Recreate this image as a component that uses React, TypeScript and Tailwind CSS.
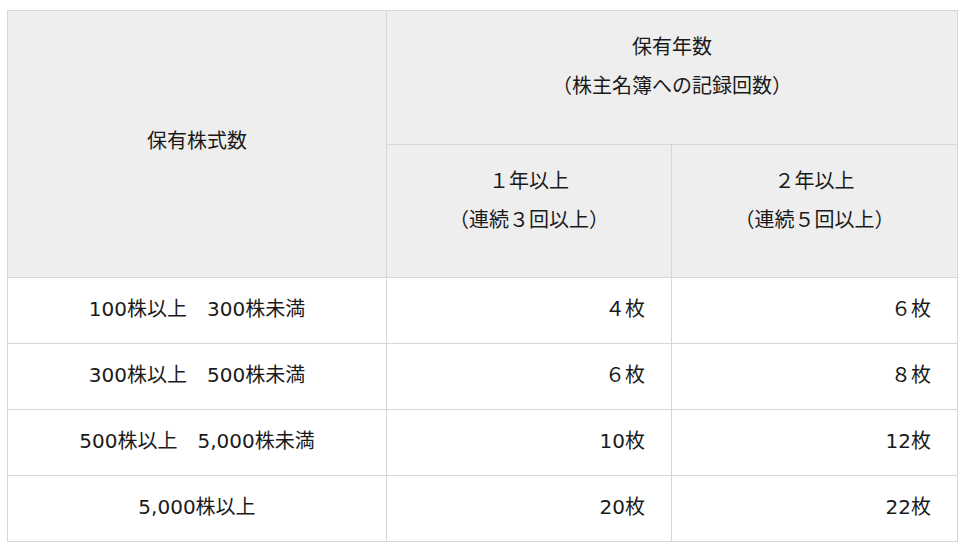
import React from 'react';

const rows = [
  { range: '100株以上　300株未満', one: '４枚', two: '６枚' },
  { range: '300株以上　500株未満', one: '６枚', two: '８枚' },
  { range: '500株以上　5,000株未満', one: '10枚', two: '12枚' },
  { range: '5,000株以上', one: '20枚', two: '22枚' },
];

export default function App() {
  return (
    <div
      className="min-h-[552px] w-[968px] bg-white pl-[7px] pt-[10px] text-[20px] text-[#1a1a1a]"
      style={{ fontFamily: '"DejaVu Sans", "Noto Sans CJK JP", sans-serif' }}
    >
      <table className="w-[950px] table-fixed border-collapse">
        <colgroup>
          <col className="w-[379px]" />
          <col className="w-[285px]" />
          <col className="w-[286px]" />
        </colgroup>
        <thead>
          <tr className="h-[134px]">
            <th
              rowSpan={2}
              className="border border-[#d6d6d6] bg-[#eeeeee] pb-[5px] align-middle font-normal leading-[39px]"
            >
              保有株式数
            </th>
            <th
              colSpan={2}
              className="border border-[#d6d6d6] bg-[#eeeeee] pt-[17px] align-top font-normal leading-[39px]"
            >
              <p>保有年数</p>
              <p>（株主名簿への記録回数）</p>
            </th>
          </tr>
          <tr className="h-[133px]">
            <th className="border border-[#d6d6d6] bg-[#eeeeee] pt-[17px] align-top font-normal leading-[39px]">
              <p>１年以上</p>
              <p>（連続３回以上）</p>
            </th>
            <th className="border border-[#d6d6d6] bg-[#eeeeee] pt-[17px] align-top font-normal leading-[39px]">
              <p>２年以上</p>
              <p>（連続５回以上）</p>
            </th>
          </tr>
        </thead>
        <tbody>
          {rows.map((r) => (
            <tr key={r.range} className="h-[66px]">
              <td className="border border-[#d6d6d6] pb-[4px] text-center align-middle">{r.range}</td>
              <td className="border border-[#d6d6d6] pb-[4px] pr-[26px] text-right align-middle">{r.one}</td>
              <td className="border border-[#d6d6d6] pb-[4px] pr-[26px] text-right align-middle">{r.two}</td>
            </tr>
          ))}
        </tbody>
      </table>
    </div>
  );
}
